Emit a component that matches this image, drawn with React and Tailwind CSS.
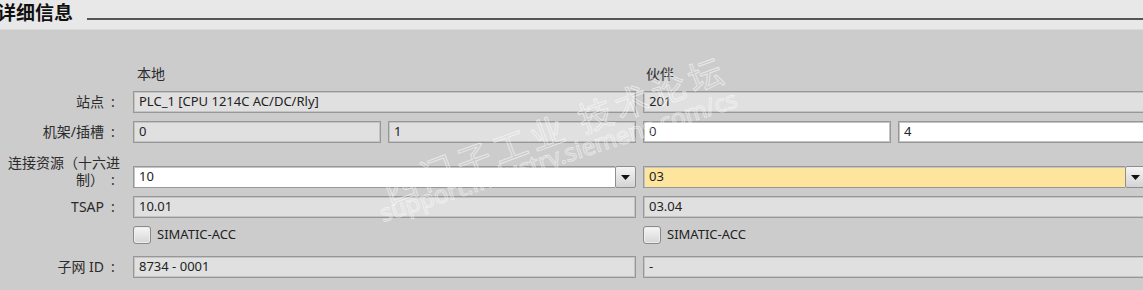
import React from "react";

const FONT = { fontFamily: '"Noto Sans", "Noto Sans CJK SC", sans-serif' };

function Label({ children, twoLine }) {
  if (twoLine) {
    return (
      <div className="flex flex-col items-end pr-[6px] text-[14px] leading-[17px] text-[#2b2b2b] whitespace-nowrap">
        <div>连接资源（十六进</div>
        <div className="flex items-center">
          <span>制）</span>
          <span className="ml-[2px] w-[14px] text-center">:</span>
        </div>
      </div>
    );
  }
  return (
    <div className="flex items-center justify-end pr-[6px] text-[14px] leading-[22px] text-[#2b2b2b] whitespace-nowrap">
      <span>{children}</span>
      <span className="ml-[2px] w-[14px] text-center">:</span>
    </div>
  );
}

function Field({ value, tone = "gray" }) {
  const bg =
    tone === "white" ? "bg-white" : tone === "yellow" ? "bg-[#fde59e]" : "bg-[#e0e0e0]";
  return (
    <div
      className={`h-[22px] border border-[#979797] shadow-[inset_0_0_0_1px_#c4c4c4] ${bg} pl-[5px] flex items-center text-[13px] text-[#222] whitespace-nowrap overflow-hidden`}
    >
      {value}
    </div>
  );
}

function Combo({ value, tone = "white" }) {
  const bg = tone === "yellow" ? "bg-[#fde59e]" : "bg-white";
  return (
    <div className="h-[22px] flex">
      <div
        className={`flex-1 border border-[#979797] border-r-0 shadow-[inset_1px_1px_0_#c4c4c4] ${bg} pl-[5px] flex items-center text-[13px] text-[#222]`}
      >
        {value}
      </div>
      <div className="w-[21px] border border-[#8e8e8e] rounded-[2px] bg-gradient-to-b from-[#f4f4f4] to-[#d4d4d4] flex items-center justify-center">
        <svg width="9" height="5" viewBox="0 0 9 5">
          <path d="M0 0 H9 L4.5 5 Z" fill="#111" />
        </svg>
      </div>
    </div>
  );
}

function Check({ label }) {
  return (
    <div className="h-[18px] flex items-center">
      <div className="w-[18px] h-[18px] rounded-[3px] border border-[#8a8a8a] bg-gradient-to-b from-[#f6f6f6] to-[#d6d6d6] shadow-[inset_0_0_0_1px_#ececec]" />
      <span className="ml-[6px] text-[13px] text-[#222]">{label}</span>
    </div>
  );
}

export default function App() {
  return (
    <div className="relative w-[1143px] h-[290px] overflow-hidden bg-[#cccccc]" style={FONT}>
      {/* header */}
      <div className="h-[30px] bg-[#e8e8e8] flex items-start border-b border-[#dadada]">
        <div
          className="ml-[-3px] mt-[2px] text-[19px] leading-[20px] font-bold text-[#111] whitespace-nowrap"
          style={{ fontFamily: '"Noto Sans CJK SC", sans-serif' }}
        >
          详细信息
        </div>
        <div className="flex-1 ml-[14px] mt-[18px] h-[2px] bg-[#555555]" />
      </div>

      {/* body */}
      <div className="pt-[35px]">
        <div className="grid grid-cols-[126px_503px_503px] gap-x-[7px]">
          <div />
          <div className="pl-[4px] text-[14px] leading-[17px] text-[#2b2b2b]">本地</div>
          <div className="pl-[3px] text-[14px] leading-[17px] text-[#2b2b2b]">伙伴</div>
        </div>

        <div className="mt-[9px] grid grid-cols-[126px_503px_503px] gap-x-[7px]">
          <Label>站点</Label>
          <Field value="PLC_1 [CPU 1214C AC/DC/Rly]" />
          <Field value="201" />
        </div>

        <div className="mt-[8px] grid grid-cols-[126px_503px_503px] gap-x-[7px]">
          <Label>机架/插槽</Label>
          <div className="grid grid-cols-2 gap-x-[7px]">
            <Field value="0" />
            <Field value="1" />
          </div>
          <div className="grid grid-cols-2 gap-x-[7px]">
            <Field value="0" tone="white" />
            <Field value="4" tone="white" />
          </div>
        </div>

        <div className="mt-[11px] grid grid-cols-[126px_503px_503px] gap-x-[7px] items-end">
          <Label twoLine />
          <Combo value="10" />
          <Combo value="03" tone="yellow" />
        </div>

        <div className="mt-[8px] grid grid-cols-[126px_503px_503px] gap-x-[7px]">
          <Label>TSAP</Label>
          <Field value="10.01" />
          <Field value="03.04" />
        </div>

        <div className="mt-[8px] grid grid-cols-[126px_503px_503px] gap-x-[7px]">
          <div />
          <Check label="SIMATIC-ACC" />
          <Check label="SIMATIC-ACC" />
        </div>

        <div className="mt-[12px] grid grid-cols-[126px_503px_503px] gap-x-[7px]">
          <Label>子网 ID</Label>
          <Field value="8734 - 0001" />
          <Field value="-" />
        </div>
      </div>

      {/* watermark */}
      <div
        className="pointer-events-none absolute left-[390px] top-[172px] origin-bottom-left -rotate-[20deg] whitespace-nowrap text-[34px] leading-[36px] tracking-[5px] text-transparent [-webkit-text-stroke:1px_rgba(255,255,255,0.55)]"
        style={{ fontFamily: '"Noto Sans CJK SC", sans-serif' }}
      >
        西门子工业 技术论坛
      </div>
      <div className="pointer-events-none absolute left-[384px] top-[201px] origin-bottom-left -rotate-[18deg] whitespace-nowrap text-[24px] leading-[24px] text-transparent [-webkit-text-stroke:1px_rgba(255,255,255,0.5)]">
        support.industry.siemens.com/cs
      </div>
    </div>
  );
}
